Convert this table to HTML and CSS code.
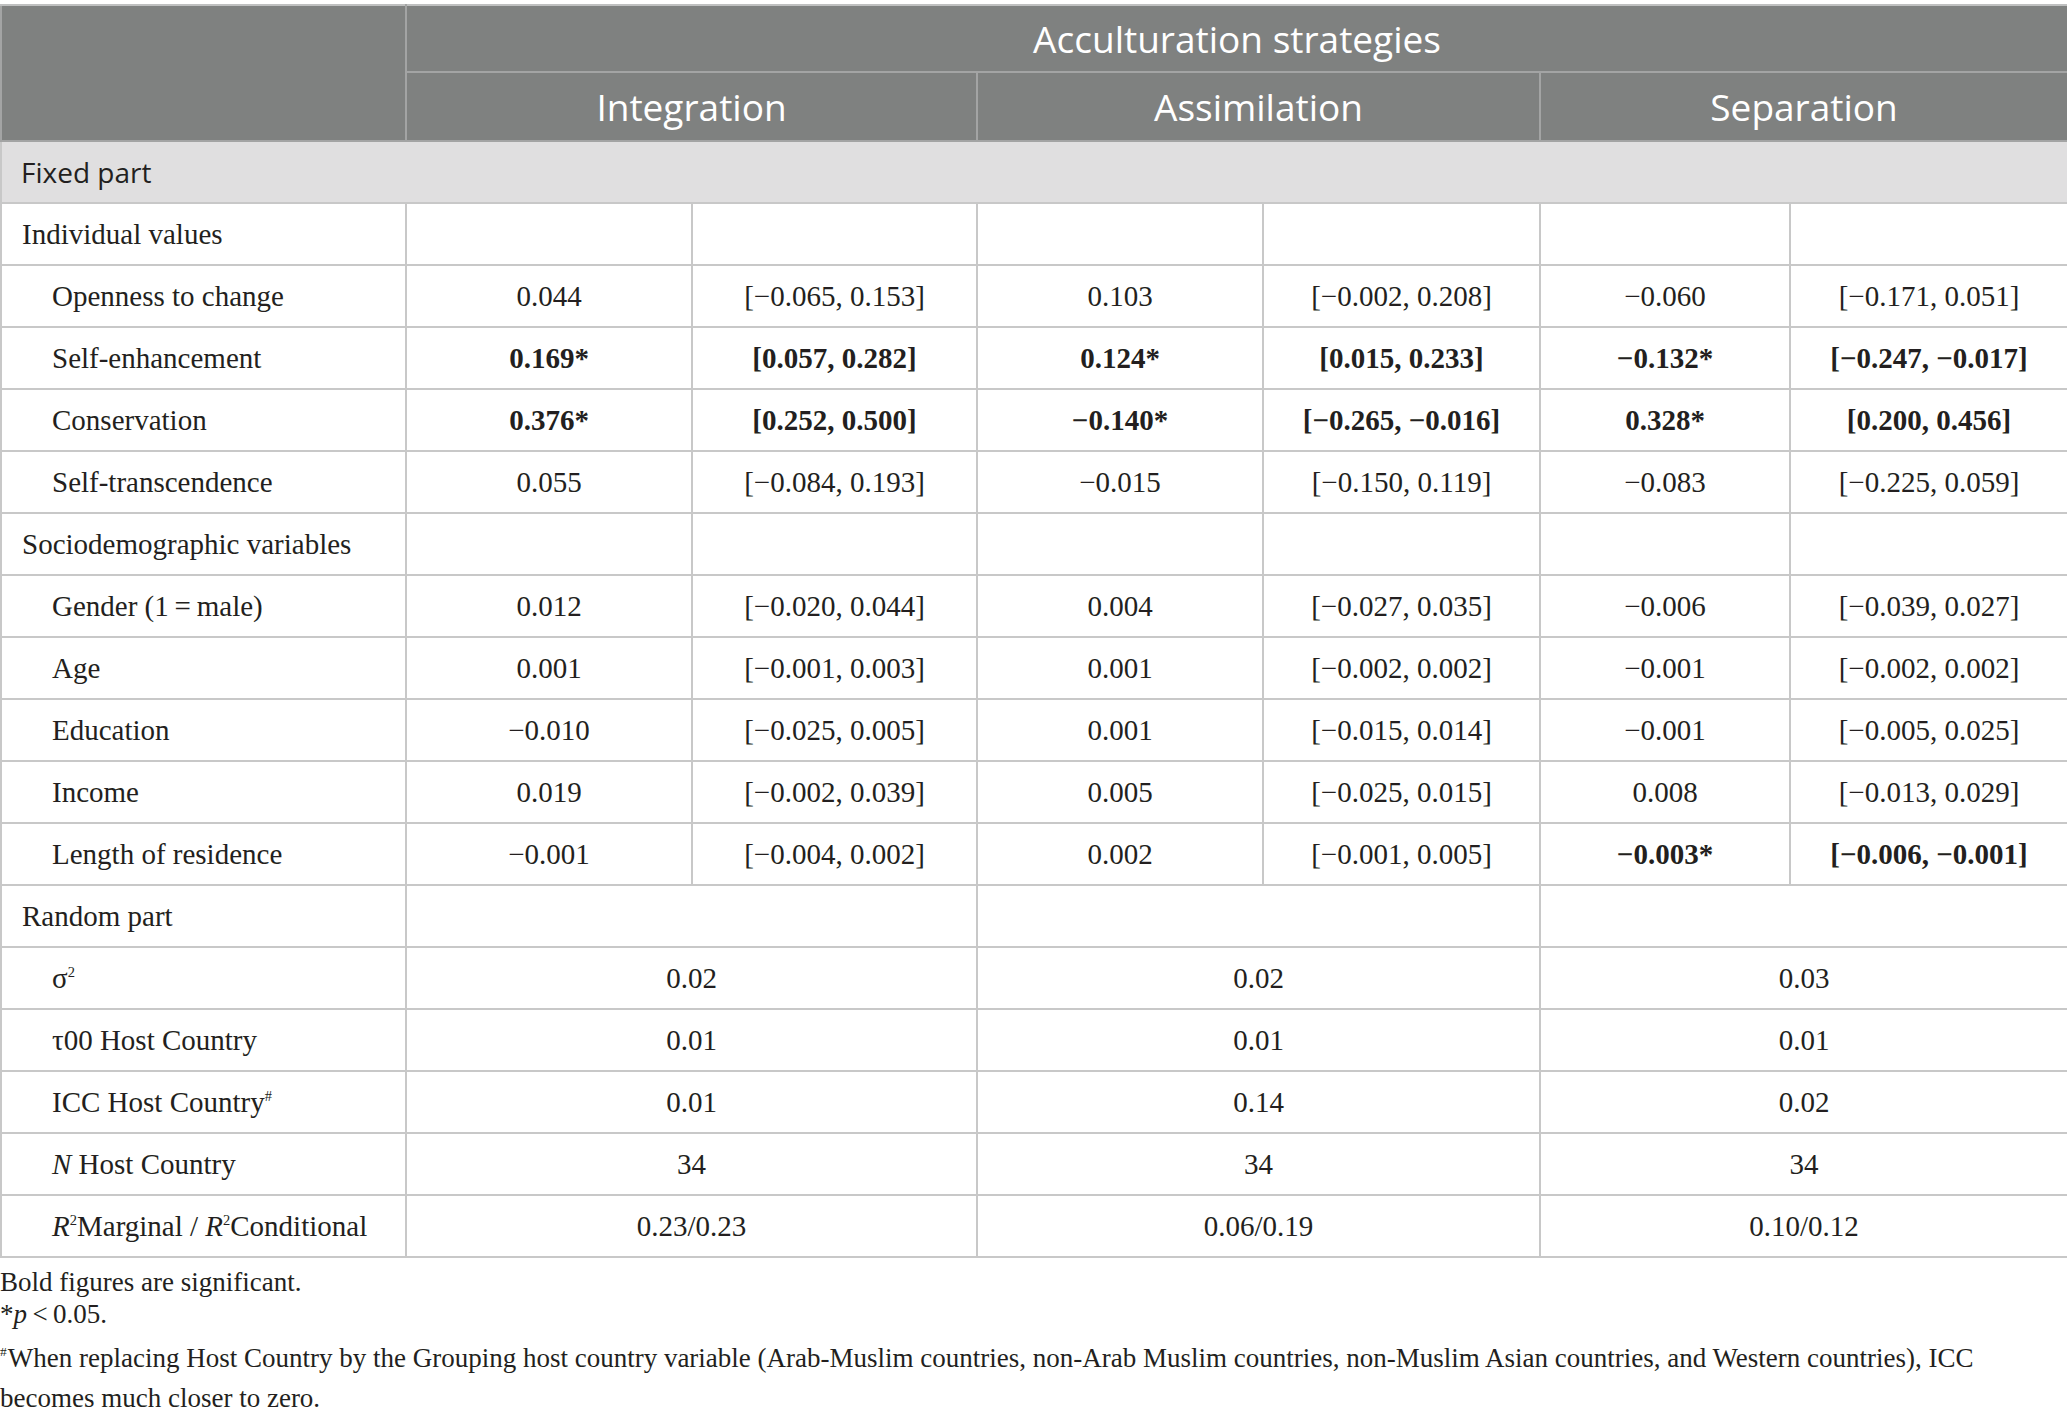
FILE: index.html
```html
<!DOCTYPE html>
<html lang="en">
<head>
<meta charset="utf-8">
<title>Acculturation strategies</title>
<link rel="stylesheet" href="styles.css">
</head>
<body>
<table class="data">
  <colgroup>
    <col class="c-label">
    <col class="c-a"><col class="c-b">
    <col class="c-c"><col class="c-d">
    <col class="c-e"><col class="c-f">
  </colgroup>
  <thead>
    <tr class="h1">
      <th rowspan="2" class="corner"></th>
      <th colspan="6">Acculturation strategies</th>
    </tr>
    <tr class="h2">
      <th colspan="2">Integration</th>
      <th colspan="2">Assimilation</th>
      <th colspan="2">Separation</th>
    </tr>
  </thead>
  <tbody>
    <tr class="section"><td colspan="7">Fixed part</td></tr>
    <tr><td class="group">Individual values</td><td></td><td></td><td></td><td></td><td></td><td></td></tr>
    <tr><td class="item">Openness to change</td><td>0.044</td><td>[−0.065, 0.153]</td><td>0.103</td><td>[−0.002, 0.208]</td><td>−0.060</td><td>[−0.171, 0.051]</td></tr>
    <tr><td class="item">Self-enhancement</td><td class="b">0.169*</td><td class="b">[0.057, 0.282]</td><td class="b">0.124*</td><td class="b">[0.015, 0.233]</td><td class="b">−0.132*</td><td class="b">[−0.247, −0.017]</td></tr>
    <tr><td class="item">Conservation</td><td class="b">0.376*</td><td class="b">[0.252, 0.500]</td><td class="b">−0.140*</td><td class="b">[−0.265, −0.016]</td><td class="b">0.328*</td><td class="b">[0.200, 0.456]</td></tr>
    <tr><td class="item">Self-transcendence</td><td>0.055</td><td>[−0.084, 0.193]</td><td>−0.015</td><td>[−0.150, 0.119]</td><td>−0.083</td><td>[−0.225, 0.059]</td></tr>
    <tr><td class="group">Sociodemographic variables</td><td></td><td></td><td></td><td></td><td></td><td></td></tr>
    <tr><td class="item">Gender (1&#8201;=&#8201;male)</td><td>0.012</td><td>[−0.020, 0.044]</td><td>0.004</td><td>[−0.027, 0.035]</td><td>−0.006</td><td>[−0.039, 0.027]</td></tr>
    <tr><td class="item">Age</td><td>0.001</td><td>[−0.001, 0.003]</td><td>0.001</td><td>[−0.002, 0.002]</td><td>−0.001</td><td>[−0.002, 0.002]</td></tr>
    <tr><td class="item">Education</td><td>−0.010</td><td>[−0.025, 0.005]</td><td>0.001</td><td>[−0.015, 0.014]</td><td>−0.001</td><td>[−0.005, 0.025]</td></tr>
    <tr><td class="item">Income</td><td>0.019</td><td>[−0.002, 0.039]</td><td>0.005</td><td>[−0.025, 0.015]</td><td>0.008</td><td>[−0.013, 0.029]</td></tr>
    <tr><td class="item">Length of residence</td><td>−0.001</td><td>[−0.004, 0.002]</td><td>0.002</td><td>[−0.001, 0.005]</td><td class="b">−0.003*</td><td class="b">[−0.006, −0.001]</td></tr>
    <tr><td class="group">Random part</td><td colspan="2"></td><td colspan="2"></td><td colspan="2"></td></tr>
    <tr><td class="item">σ<sup>2</sup></td><td colspan="2">0.02</td><td colspan="2">0.02</td><td colspan="2">0.03</td></tr>
    <tr><td class="item">τ00 Host Country</td><td colspan="2">0.01</td><td colspan="2">0.01</td><td colspan="2">0.01</td></tr>
    <tr><td class="item">ICC Host Country<sup>#</sup></td><td colspan="2">0.01</td><td colspan="2">0.14</td><td colspan="2">0.02</td></tr>
    <tr><td class="item"><i>N</i> Host Country</td><td colspan="2">34</td><td colspan="2">34</td><td colspan="2">34</td></tr>
    <tr><td class="item"><i>R</i><sup>2</sup>Marginal / <i>R</i><sup>2</sup>Conditional</td><td colspan="2">0.23/0.23</td><td colspan="2">0.06/0.19</td><td colspan="2">0.10/0.12</td></tr>
  </tbody>
</table>
<div class="notes">
  <p class="note">Bold figures are significant.</p>
  <p class="note">*<i>p</i>&#8201;&lt;&#8201;0.05.</p>
  <p class="note long"><sup>#</sup>When replacing Host Country by the Grouping host country variable (Arab-Muslim countries, non-Arab Muslim countries, non-Muslim Asian countries, and Western countries), ICC becomes much closer to zero.</p>
</div>
</body>
</html>
```

FILE: styles.css
```css
html, body {
  margin: 0;
  padding: 0;
  background: #ffffff;
}

body {
  padding-top: 4px;
  font-family: "Liberation Serif", "Times New Roman", serif;
  color: #231f20;
}

.data {
  border-collapse: collapse;
  table-layout: fixed;
  width: 2067px;
  font-size: 29px;
}

.c-label { width: 405px; }
.c-a { width: 286px; }
.c-b { width: 285px; }
.c-c { width: 286px; }
.c-d { width: 277px; }
.c-e { width: 250px; }
.c-f { width: 278px; }

.data th {
  background: #7f8180;
  color: #ffffff;
  font-family: "Open Sans", "Liberation Sans", sans-serif;
  font-weight: 400;
  font-size: 37px;
  text-align: center;
  padding: 0;
  border: 2px solid #a3a4a4;
  border-top-color: #bfc0c0;
}

.h1 th { height: 65px; }
.h2 th { height: 67px; }

.data td {
  border: 2px solid #c8c8c8;
  padding: 0;
  height: 60px;
  text-align: center;
  white-space: nowrap;
}

.data td.group {
  text-align: left;
  padding-left: 20px;
}

.data td.item {
  text-align: left;
  padding-left: 50px;
}

.data td.b {
  font-weight: 700;
}

.section td {
  background: #e0dfe0;
  font-family: "Open Sans", "Liberation Sans", sans-serif;
  font-size: 28px;
  text-align: left;
  padding-left: 19px;
  border-top-color: #c0c0c0;
}

.data sup {
  font-size: 0.5em;
  line-height: 0;
  vertical-align: 0.75em;
}

.notes {
  width: 2030px;
  padding-top: 8px;
  font-size: 27px;
}

.note {
  margin: 0;
  line-height: 32px;
}

.note.long {
  line-height: 40px;
  margin-top: 8px;
}

.note sup {
  font-size: 0.5em;
  line-height: 0;
  vertical-align: 0.8em;
  margin-right: 1px;
}
```
